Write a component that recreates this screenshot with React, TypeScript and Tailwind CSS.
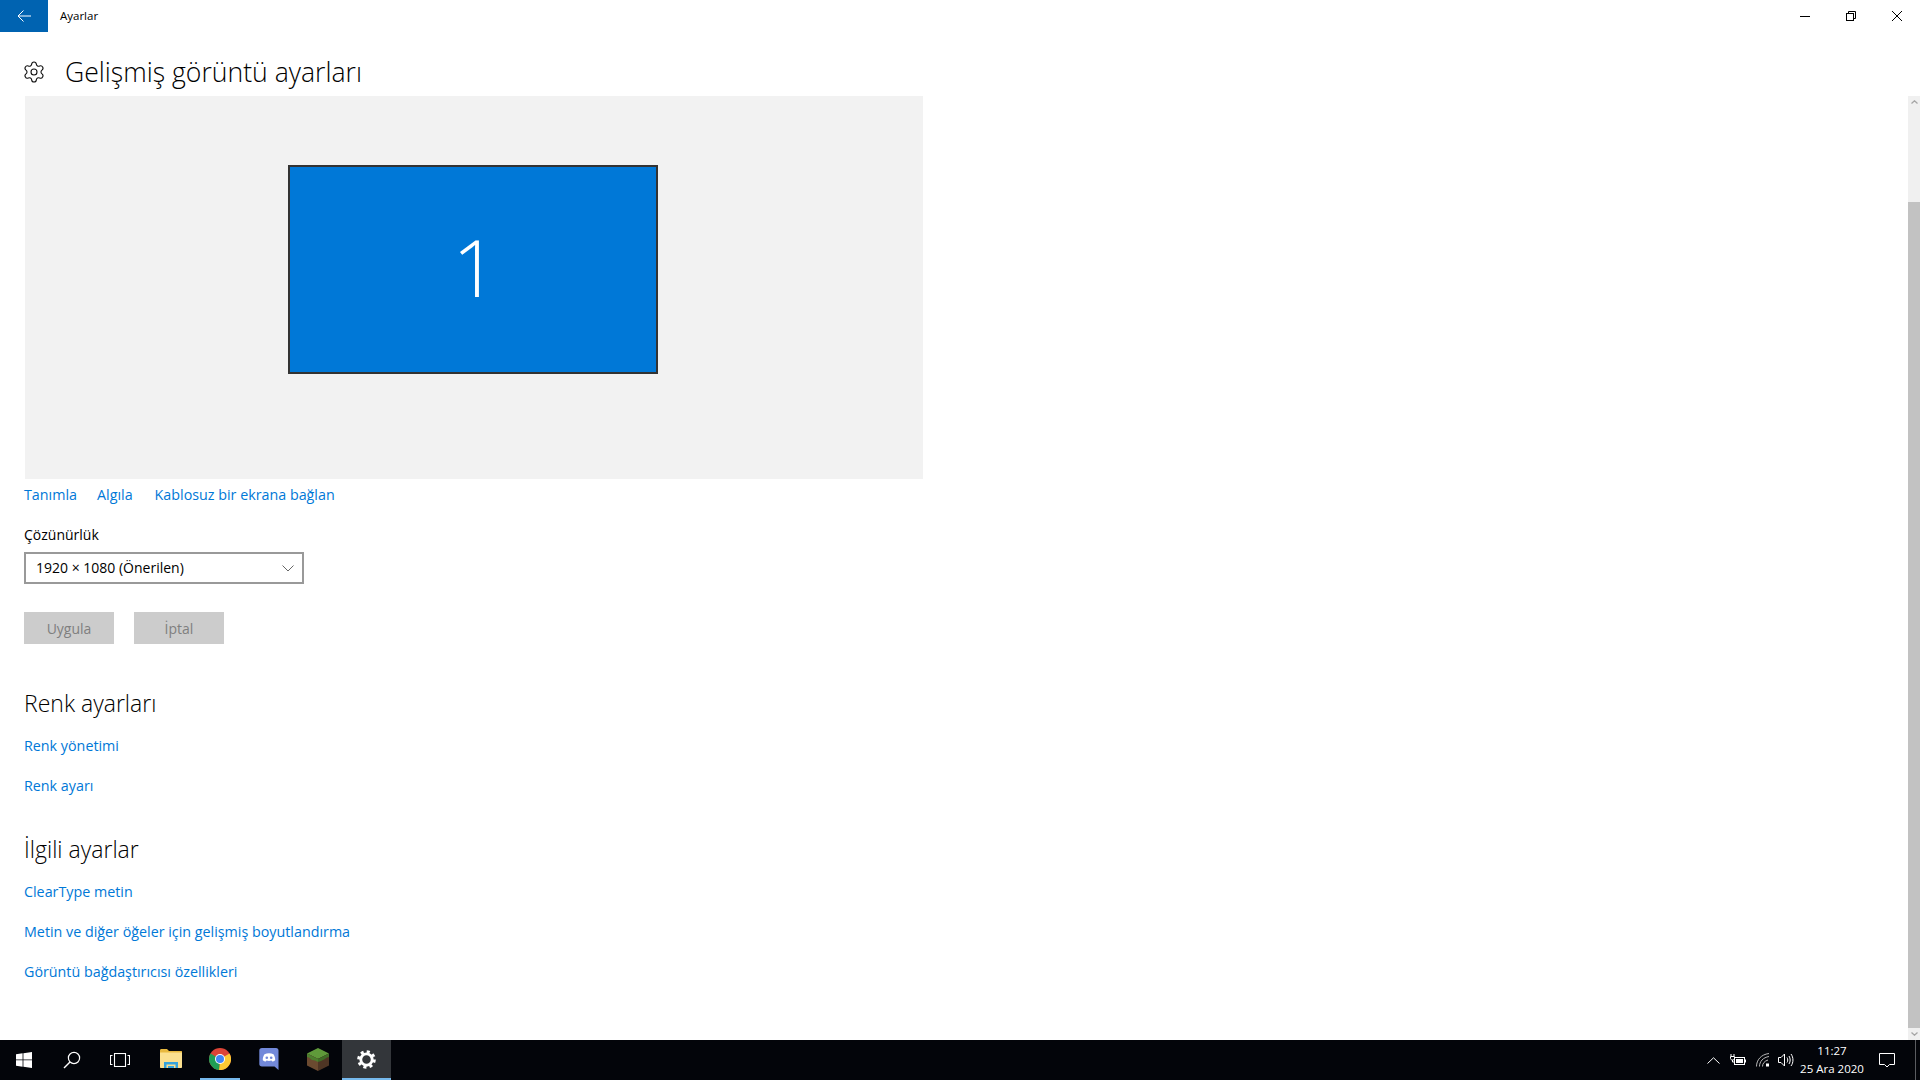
import { Settings } from "lucide-react";

function Link({ children }: { children: string }) {
  return <a href="#" className="text-[#0078d7] text-[14.3px] whitespace-nowrap">{children}</a>;
}

function StartIcon() {
  return (
    <svg width="16" height="16" viewBox="0 0 16 16" fill="#fff">
      <path d="M0 2.3 6.6 1.3V7.5H0ZM7.4 1.2 16 0V7.5H7.4ZM0 8.3H6.6V14.7L0 13.7ZM7.4 8.3H16V16L7.4 14.8Z" />
    </svg>
  );
}

function SearchIcon() {
  return (
    <svg width="18" height="18" viewBox="0 0 18 18" fill="none" stroke="#fff" strokeWidth="1.2">
      <circle cx="11" cy="7" r="5.6" />
      <path d="M7 11 1 17" strokeWidth="1.4" />
    </svg>
  );
}

function TaskViewIcon() {
  return (
    <svg width="20" height="14" viewBox="0 0 20 14" fill="none" stroke="#fff" strokeWidth="1.1">
      <rect x="4.5" y="0.5" width="11" height="13" />
      <path d="M2.5 2.5H.5V11.5H2.5M17.5 2.5H19.5V11.5H17.5" />
    </svg>
  );
}

function ExplorerIcon() {
  return (
    <svg width="22" height="20" viewBox="0 0 22 20">
      <path d="M0 1.5C0 .7.5 0 1.3 0H7L9 2H21.5C21.8 2 22 2.2 22 2.6V4H0Z" fill="#e8b93f" />
      <path d="M0 3.5H22V18C22 18.6 21.6 19 21 19H1C.4 19 0 18.6 0 18Z" fill="#fbe08f" />
      <path d="M4 19V13H18V19H15.5V15.5H6.5V19Z" fill="#36a3dc" />
      <rect x="8" y="17" width="6" height="2" fill="#36a3dc" />
    </svg>
  );
}

function ChromeIcon() {
  return (
    <svg width="22" height="22" viewBox="0 0 22 22">
      <circle cx="11" cy="11" r="11" fill="#dc4437" />
      <path d="M11 11 20.5 5.5A11 11 0 0 1 10 22Z" fill="#fcc934" />
      <path d="M11 11 10 22A11 11 0 0 1 1.5 5.5Z" fill="#1f9e55" />
      <circle cx="11" cy="11" r="5" fill="#fff" />
      <circle cx="11" cy="11" r="4" fill="#4285f4" />
    </svg>
  );
}

function DiscordIcon() {
  return (
    <svg width="20" height="22" viewBox="0 0 20 22">
      <path d="M3 0H17C18.6 0 19.5 1 19.5 2.5V22L15.5 18.5H3C1.2 18.5.3 17.5.3 16V2.5C.3 1 1.2 0 3 0Z" fill="#7289da" />
      <path d="M5.5 6.2C8.2 5 11.8 5 14.5 6.2 15.8 8.2 16.3 10.2 16.2 12.2 15.2 13 14.2 13.4 13.2 13.6L12.5 12.6C10.5 13.2 9.5 13.2 7.5 12.6L6.8 13.6C5.8 13.4 4.8 13 3.8 12.2 3.7 10.2 4.2 8.2 5.5 6.2Z" fill="#fff" />
      <circle cx="7.8" cy="9.8" r="1.3" fill="#7289da" />
      <circle cx="12.2" cy="9.8" r="1.3" fill="#7289da" />
    </svg>
  );
}

function GrassBlockIcon() {
  return (
    <svg width="22" height="23" viewBox="0 0 22 23">
      <path d="M11 0 22 5.5 11 11 0 5.5Z" fill="#5f9a3a" />
      <path d="M0 5.5 11 11V23L0 17.5Z" fill="#6b4a30" />
      <path d="M22 5.5 11 11V23L22 17.5Z" fill="#4e3524" />
      <path d="M0 5.5 11 11V14L8 12.5 5 12 2 9.5 0 9Z" fill="#4c7f2d" />
      <path d="M22 5.5 11 11V14L14 13 17 11.5 20 9.5 22 9Z" fill="#3f6c26" />
    </svg>
  );
}

function TaskbarGear() {
  return (
    <svg width="19" height="19" viewBox="0 0 20 20" fill="none" stroke="#fff">
      <circle cx="10" cy="10" r="6" strokeWidth="3" />
      <circle cx="10" cy="10" r="8.2" strokeWidth="3.2" strokeDasharray="3.2 3.24" />
    </svg>
  );
}

function BatteryIcon() {
  return (
    <svg width="16" height="12" viewBox="0 0 16 12" fill="none" stroke="#fff">
      <path d="M1 0V2M4 0V2M.5 2.5H4.5V4.5C4.5 5.5 3.5 6 2.5 6S.5 5.5.5 4.5ZM2.5 6V8H4" strokeWidth="1" />
      <rect x="4.5" y="3.5" width="10" height="7" strokeWidth="1" />
      <rect x="6" y="5" width="7" height="4" fill="#fff" stroke="none" />
      <rect x="15" y="5.5" width="1" height="3" fill="#fff" stroke="none" />
    </svg>
  );
}

function WifiIcon() {
  return (
    <svg width="14" height="14" viewBox="0 0 14 14" fill="none" stroke="#b8b8b8" strokeWidth="1">
      <path d="M.5 13.5C.5 7 5 1.5 13 .5M3.5 13.5C3.5 8.5 7 4.5 13 3.5M6.5 13.5C6.5 10.5 8.5 8 12 7" />
      <rect x="10" y="10.5" width="3" height="3" fill="#fff" stroke="none" />
    </svg>
  );
}

function VolumeIcon() {
  return (
    <svg width="16" height="14" viewBox="0 0 16 14" fill="none" stroke="#fff" strokeWidth="1">
      <path d="M.5 4.5H3L6.5 1V13L3 9.5H.5Z" />
      <path d="M9 4.5C10 6 10 8 9 9.5M11 3C12.6 5.5 12.6 8.5 11 11M13 1C15.6 4.5 15.6 9.5 13 13" />
    </svg>
  );
}

function TaskbarButton({ children, line, bg }: { children: React.ReactNode; line?: "short" | "full"; bg?: boolean }) {
  return (
    <div className={`w-[49px] h-10 flex justify-center ${bg ? "bg-[#33363a]" : ""}`}>
      <div
        className={`h-10 flex items-center justify-center border-b-2 ${line ? "border-[#76b9ed]" : "border-transparent"} ${
          line === "full" ? "w-full" : "w-10"
        }`}
      >
        {children}
      </div>
    </div>
  );
}

export default function App() {
  return (
    <div className="w-[1920px] h-[1080px] flex flex-col bg-white overflow-hidden text-black text-[14px] leading-5 font-['Open_Sans','Noto_Sans',sans-serif]">
      {/* title bar */}
      <div className="h-8 flex items-center shrink-0">
        <div className="w-12 h-8 bg-[#0063b1] flex items-center justify-center">
          <svg width="14" height="12" viewBox="0 0 14 12" fill="none" stroke="#fff" strokeWidth="1">
            <path d="M14 6H1M6.5.5 1 6l5.5 5.5" />
          </svg>
        </div>
        <span className="ml-3 text-[11.5px]">Ayarlar</span>
        <div className="ml-auto flex items-center">
          <div className="w-[46px] h-8 flex items-center justify-center">
            <div className="w-[10px] h-px bg-black" />
          </div>
          <div className="w-[46px] h-8 flex items-center justify-center">
            <svg width="10" height="10" viewBox="0 0 10 10" fill="none" stroke="#000">
              <rect x="0.5" y="2.5" width="7" height="7" />
              <path d="M2.5 2.5V.5H9.5V7.5H7.5" />
            </svg>
          </div>
          <div className="w-[46px] h-8 flex items-center justify-center">
            <svg width="10" height="10" viewBox="0 0 10 10" fill="none" stroke="#000">
              <path d="M0 0 10 10M10 0 0 10" />
            </svg>
          </div>
        </div>
      </div>

      {/* page heading */}
      <div className="h-16 flex items-center shrink-0 pl-[22px] pt-4">
        <Settings size={24} strokeWidth={1.1} color="#111" />
        <h1 className="ml-[19px] text-[26.6px] leading-9 font-light whitespace-nowrap">Gelişmiş görüntü ayarları</h1>
      </div>

      <div className="flex-1 flex min-h-0">
        <main className="flex-1 pl-6 min-w-0">
          <div className="w-[898px] h-[383px] ml-px bg-[#f2f2f2] pt-[69px] pl-[263px]">
            <div className="w-[370px] h-[209px] bg-[#0078d7] border-2 border-[#333] flex items-center justify-center pb-[7px] pl-[4px]">
              <span className="text-white text-[80px] leading-none font-light">1</span>
            </div>
          </div>

          <div className="flex gap-5 mt-[6px] h-5">
            <Link>Tanımla</Link>
            <Link>Algıla</Link>
            <span className="ml-[2px]"><Link>Kablosuz bir ekrana bağlan</Link></span>
          </div>

          <div className="mt-5 h-5">Çözünürlük</div>
          <div className="mt-[7px] w-[280px] h-8 border-2 border-[#999] flex items-center pl-[10px] pr-[8px]">
            <span className="whitespace-nowrap">1920 × 1080 (Önerilen)</span>
            <svg className="ml-auto" width="12" height="7" viewBox="0 0 12 7" fill="none" stroke="#666">
              <path d="M.5.5 6 6 11.5.5" />
            </svg>
          </div>

          <div className="flex gap-5 mt-7">
            <div className="w-[90px] h-8 pt-px bg-[#ccc] text-[#7f7f7f] flex items-center justify-center">Uygula</div>
            <div className="w-[90px] h-8 pt-px bg-[#ccc] text-[#7f7f7f] flex items-center justify-center">İptal</div>
          </div>

          <h2 className="mt-[45px] text-[23px] font-light leading-7 whitespace-nowrap">Renk ayarları</h2>
          <div className="mt-[19px] h-5"><Link>Renk yönetimi</Link></div>
          <div className="mt-5 h-5"><Link>Renk ayarı</Link></div>

          <h2 className="mt-[39px] text-[23px] font-light leading-7 whitespace-nowrap">İlgili ayarlar</h2>
          <div className="mt-[19px] h-5"><Link>ClearType metin</Link></div>
          <div className="mt-5 h-5"><Link>Metin ve diğer öğeler için gelişmiş boyutlandırma</Link></div>
          <div className="mt-5 h-5"><Link>Görüntü bağdaştırıcısı özellikleri</Link></div>
        </main>

        {/* scrollbar */}
        <div className="w-3 shrink-0 bg-[#f0f0f0] flex flex-col">
          <div className="h-3 flex items-center justify-center">
            <svg width="7" height="4" viewBox="0 0 7 4" fill="none" stroke="#a6a6a6" strokeWidth="1.3"><path d="M.5 3.5 3.5.8l3 2.7" /></svg>
          </div>
          <div className="h-[94px]" />
          <div className="flex-1 bg-[#c2c2c2]" />
          <div className="h-3 flex items-center justify-center">
            <svg width="7" height="4" viewBox="0 0 7 4" fill="none" stroke="#a6a6a6" strokeWidth="1.3"><path d="M.5.5 3.5 3.2l3-2.7" /></svg>
          </div>
        </div>
      </div>

      {/* taskbar */}
      <div className="h-10 shrink-0 bg-[#03050a] flex items-center text-white">
        <div className="w-12 h-10 flex items-center justify-center"><StartIcon /></div>
        <div className="w-[48px] h-10 flex items-center justify-center"><SearchIcon /></div>
        <div className="w-[47px] h-10 flex items-center justify-center"><TaskViewIcon /></div>
        <div className="w-[3px]" />
        <TaskbarButton><ExplorerIcon /></TaskbarButton>
        <TaskbarButton line="short"><ChromeIcon /></TaskbarButton>
        <TaskbarButton><DiscordIcon /></TaskbarButton>
        <TaskbarButton><GrassBlockIcon /></TaskbarButton>
        <TaskbarButton line="full" bg><TaskbarGear /></TaskbarButton>

        <div className="ml-auto flex items-center h-10">
          <svg width="13" height="7" viewBox="0 0 13 7" fill="none" stroke="#fff"><path d="M.5 6.5 6.5.8l6 5.7" /></svg>
          <div className="ml-[10px]"><BatteryIcon /></div>
          <div className="ml-[10px]"><WifiIcon /></div>
          <div className="ml-[8px]"><VolumeIcon /></div>
          <div className="ml-[2px] w-[72px] flex flex-col items-center text-[11.5px] leading-[18px] whitespace-nowrap">
            <span>11:27</span>
            <span>25 Ara 2020</span>
          </div>
          <div className="ml-[11px] mr-[20px]">
            <svg width="16" height="15" viewBox="0 0 16 15" fill="none" stroke="#fff" strokeWidth="1">
              <path d="M.5.5H15.5V11.5H10.5L8 14 5.5 11.5H.5Z" />
            </svg>
          </div>
          <div className="w-[5px] h-10 border-l border-[#5a5c60]" />
        </div>
      </div>
    </div>
  );
}
